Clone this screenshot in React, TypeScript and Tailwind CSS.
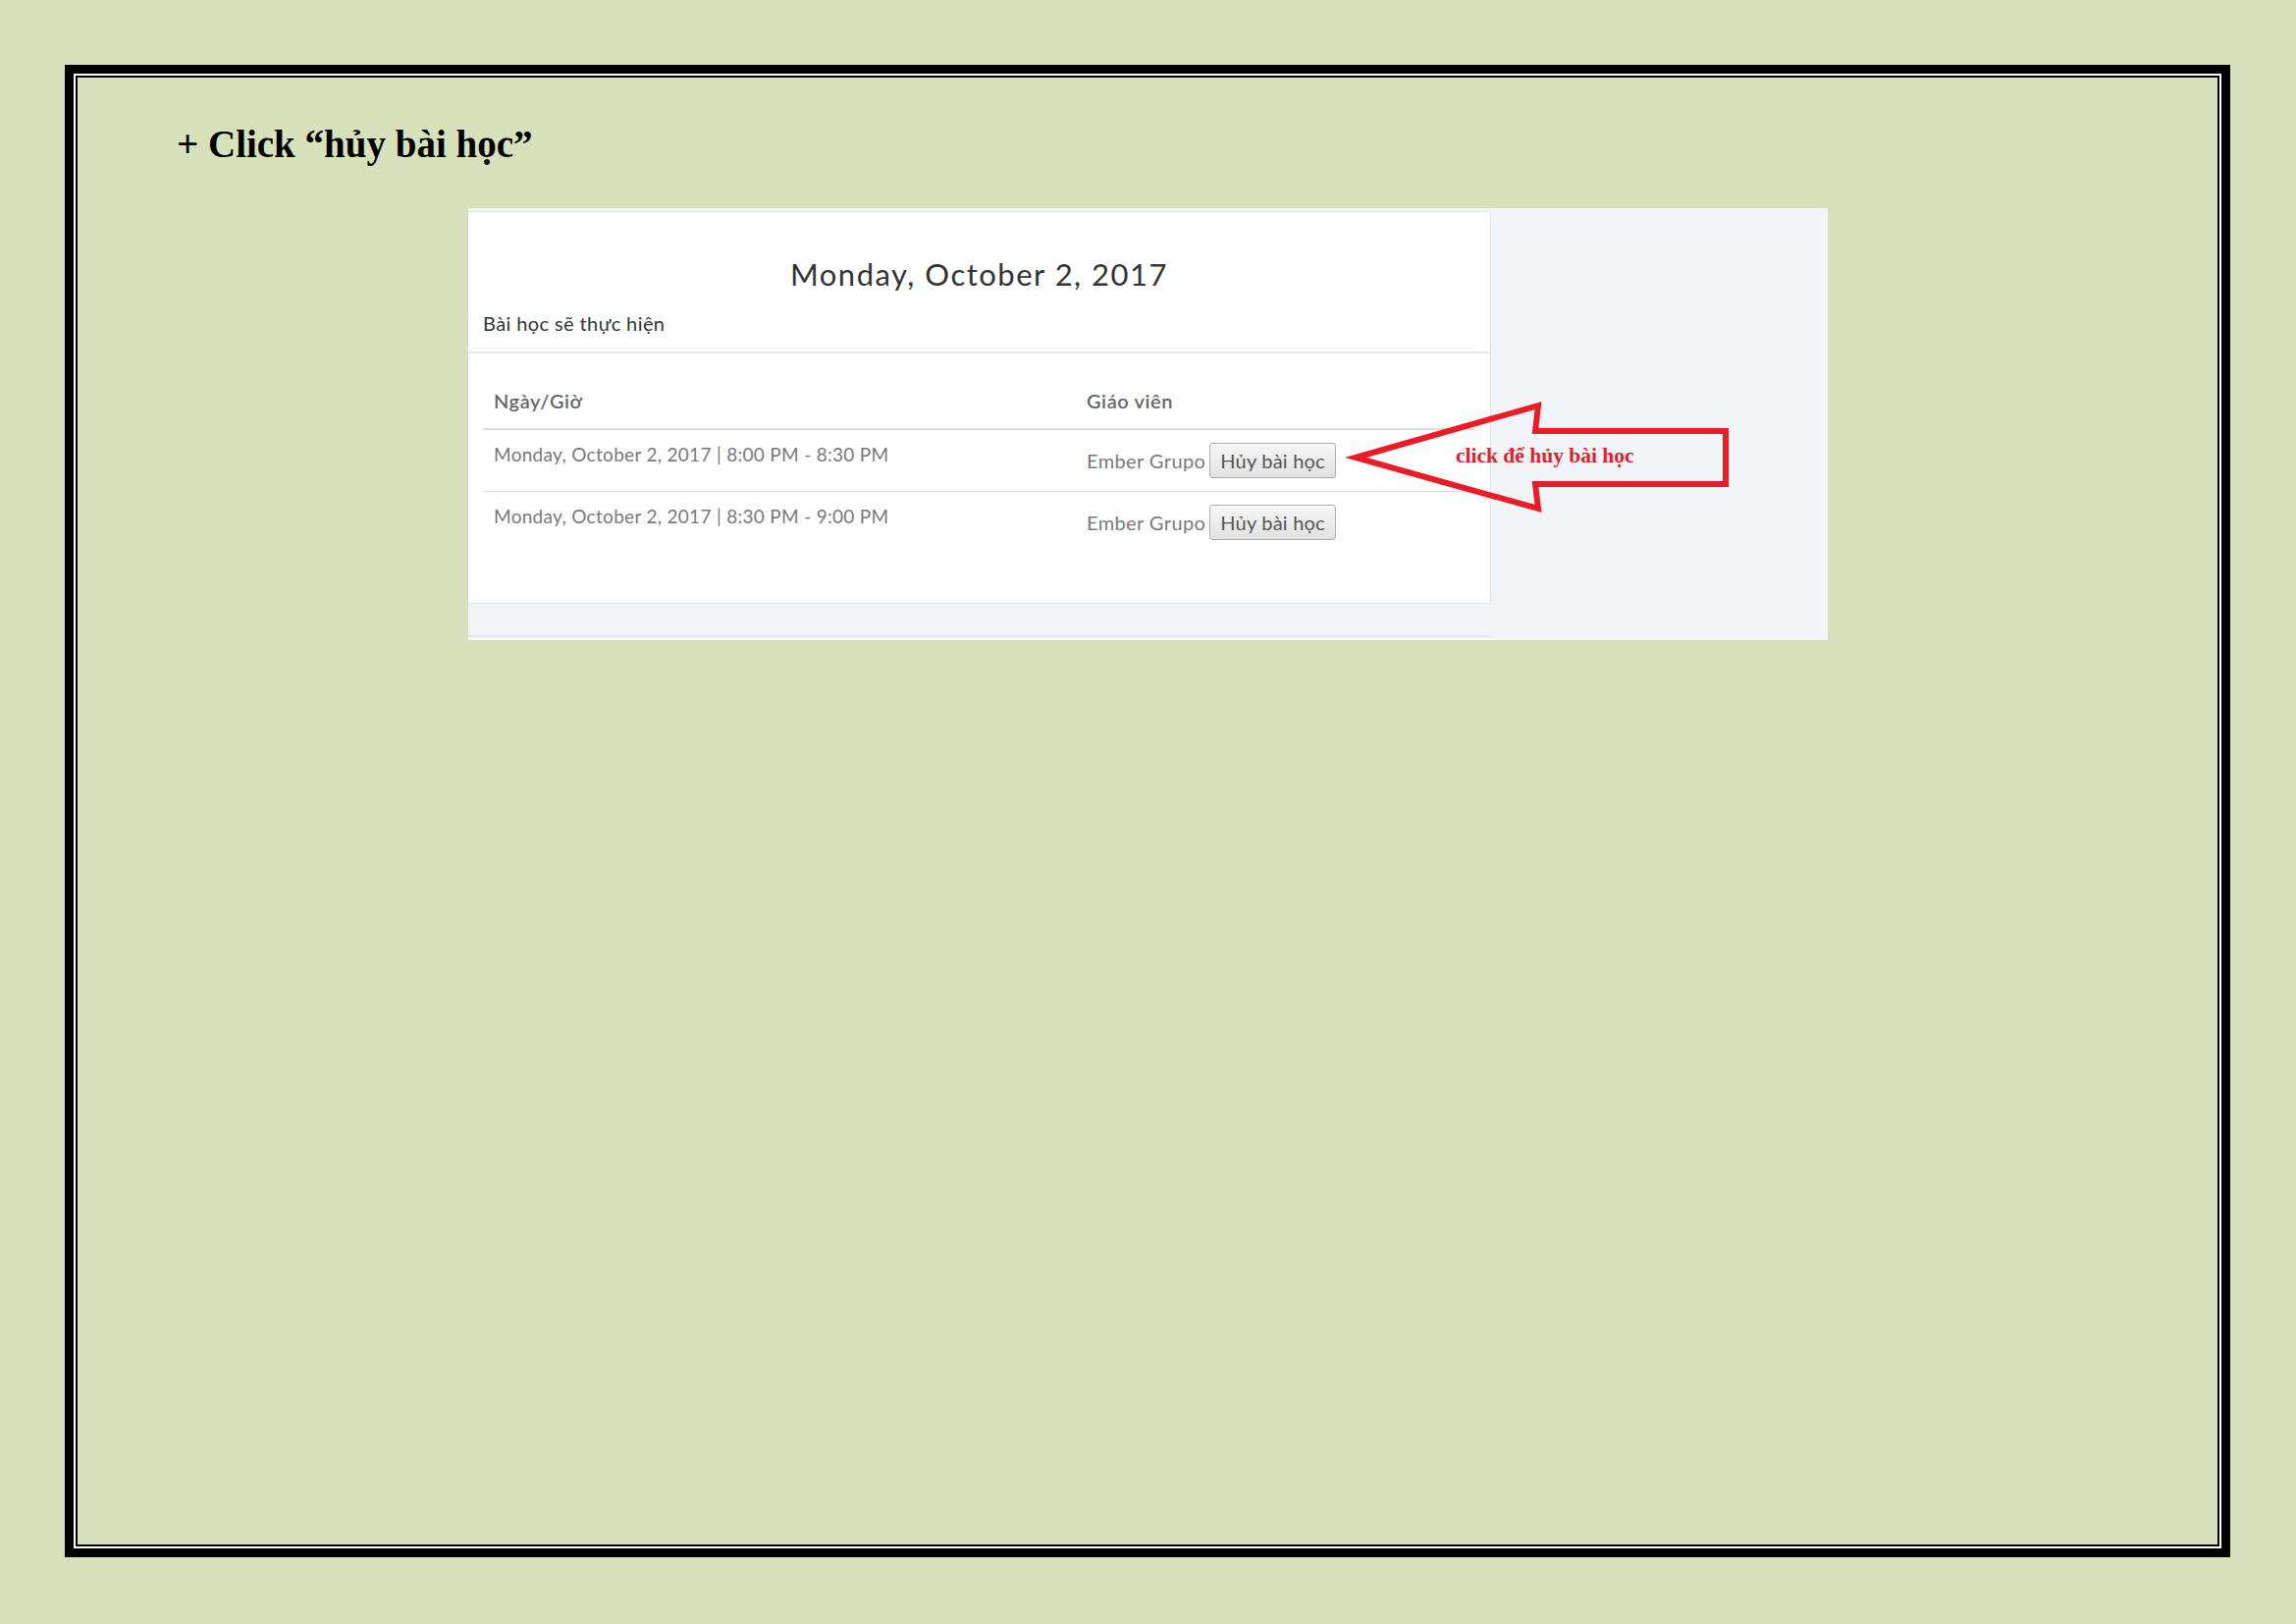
import React from "react";

const rows = [
  { when: "Monday, October 2, 2017 | 8:00 PM - 8:30 PM", teacher: "Ember Grupo" },
  { when: "Monday, October 2, 2017 | 8:30 PM - 9:00 PM", teacher: "Ember Grupo" },
];

function CancelButton() {
  return (
    <button className="h-[36px] px-[10px] rounded-[3px] border border-[#adadad] bg-gradient-to-b from-[#f7f7f7] to-[#e2e2e2] text-[20px] leading-[26px] tracking-[0.2px] text-[#555] shadow-[inset_0_1px_0_#fff]">
      Hủy bài học
    </button>
  );
}

function LessonCard() {
  return (
    <div className="w-[1385px] h-[440px] bg-[#f2f5f8] pt-[3px] flex flex-col font-[Lato,sans-serif]">
      <div className="w-[1042px] h-[400px] bg-white border border-l-0 border-[#dfe4ea] rounded-r-[4px] flex flex-col">
        <h2 className="pt-[45px] text-center text-[31px] leading-[36px] text-[#333] tracking-[1.5px]">
          Monday, October 2, 2017
        </h2>
        <p className="mt-[19px] pl-[15px] text-[20px] leading-[26px] tracking-[0.4px] text-[#333]">Bài học sẽ thực hiện</p>
        <div className="mt-[16px] h-[2px] bg-[#e6eaef]" />
        <div className="mt-[20px] mx-[15px]">
          <div className="flex border-b-2 border-[#dddddd] text-[20px] leading-[26px] font-semibold tracking-[0.6px] text-[#666]">
            <div className="w-[604px] pl-[11px] pt-[15px] pb-[15px]">Ngày/Giờ</div>
            <div className="flex-1 pl-[11px] pt-[15px] pb-[15px]">Giáo viên</div>
          </div>
          {rows.map((r, i) => (
            <div key={i} className={"flex leading-[26px] text-[#7a7a7a] " + (i > 0 ? "border-t border-[#dddddd]" : "")}>
              <div className="w-[604px] pl-[11px] pt-[12px] pb-[16px] text-[19px] tracking-[0.3px]">{r.when}</div>
              <div className="flex-1 pl-[11px] pt-[13px] pb-[13px] flex items-center gap-[4px] text-[20px] tracking-[0.4px]">
                <span>{r.teacher}</span>
                <CancelButton />
              </div>
            </div>
          ))}
        </div>
      </div>
      <div className="mt-[32px] w-[1042px] h-[5px] border-t-2 border-[#e3e8ee] bg-[#f7f9fb]" />
    </div>
  );
}

export default function App() {
  return (
    <div className="relative w-[2339px] h-[1654px] overflow-hidden bg-[#d7e1bc] pt-[66px] pl-[66px]">
      <div className="w-[2206px] h-[1520px] border-[9px] border-black">
        <div className="h-full border-2 border-white">
          <div className="h-full border-2 border-black pl-[101px] pt-[48px]">
            <h1 className="font-['Liberation_Serif',serif] font-bold text-[39px] leading-[39px] text-black">
              + Click “hủy bài học”
            </h1>
            <div className="mt-[46px] ml-[297px]">
              <LessonCard />
            </div>
          </div>
        </div>
      </div>

      {/* callout arrow over the screenshot */}
      <svg className="absolute left-[1360px] top-[400px]" width="410" height="130" viewBox="0 0 410 130">
        <polygon
          points="21,66 207,13 204,39 398,39 398,93 204,93 207,118"
          fill="none"
          stroke="#ea1d27"
          strokeWidth="6"
          strokeLinejoin="miter"
        />
      </svg>
      <span className="absolute left-[1483px] top-[454px] font-['Liberation_Serif',serif] font-bold text-[21.5px] leading-[21px] text-[#e3202a]">
        click để hủy bài học
      </span>
    </div>
  );
}
